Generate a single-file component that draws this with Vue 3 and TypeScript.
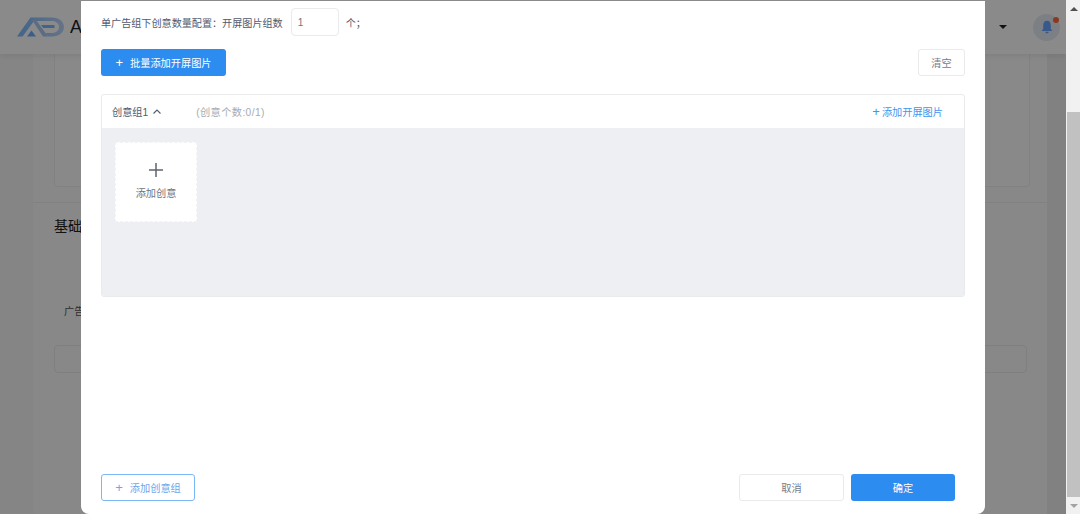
<template>
  <div class="page">
    <div class="stage">
      <!-- page behind the modal -->
      <div class="behind">
        <header class="topbar">
          <svg class="logo" width="47" height="20" viewBox="0 0 47 20">
            <defs>
              <linearGradient id="logoFade" x1="0" y1="0" x2="1" y2="0">
                <stop offset="0" stop-color="#7ab8ff" />
                <stop offset="1" stop-color="#bcd6f8" />
              </linearGradient>
            </defs>
            <path d="M0 19.5 L13.5 0.5 H35 C42 0.5 47 4.5 47 10 C47 15.5 42 19.5 35 19.5 H31 L28.4 16 H35 C39 16 42 13.5 42 10 C42 6.5 39 4 35 4 H17 L5.6 19.5 Z" fill="url(#logoFade)" />
            <path d="M15 3 H19 L31 19.5 H26 Z" fill="#a9c8f3" />
            <path d="M24 8 H37.5 V11 H26.2 Z" fill="#7ab8ff" />
            <path d="M10 19.5 L14.5 13.5 L19 19.5 Z" fill="#6aaeff" />
          </svg>
          <span class="brand">Ad</span>
          <span class="spacer"></span>
          <span class="caret"></span>
          <span class="bell">
            <svg width="12" height="14" viewBox="0 0 14 16">
              <path d="M7 0.8 C4 0.8 2.6 3 2.6 6 V10 L0.8 12.6 H13.2 L11.4 10 V6 C11.4 3 10 0.8 7 0.8 Z" fill="#6aa5ff" />
              <path d="M5 13.6 H9 C9 15 8 15.6 7 15.6 C6 15.6 5 15 5 13.6 Z" fill="#6aa5ff" />
            </svg>
            <i class="dot"></i>
          </span>
        </header>
        <div class="behind-body">
          <div class="side"></div>
          <main class="content">
            <div class="top-block">
              <div class="card"></div>
            </div>
            <div class="base">
              <h3 class="base-title">基础信息</h3>
              <p class="base-label">广告组</p>
              <div class="base-input"></div>
            </div>
          </main>
          <div class="side-right"></div>
        </div>
      </div>
      <div class="mask"></div>

      <!-- modal -->
      <section class="dialog">
        <div class="config-row">
          <span>单广告组下创意数量配置：开屏图片组数</span>
          <span class="num-input">1</span>
          <span>个；</span>
        </div>

        <div class="action-row">
          <button class="btn primary batch"><span class="plus">+</span>批量添加开屏图片</button>
          <button class="btn clear">清空</button>
        </div>

        <div class="group">
          <div class="group-head">
            <span class="group-name">创意组1</span>
            <svg class="chevron" width="8" height="5" viewBox="0 0 8 5">
              <path d="M0.5 4.5 L4 1 L7.5 4.5" fill="none" stroke="#515a6e" stroke-width="1.1" />
            </svg>
            <span class="group-count">(创意个数:0/1)</span>
            <span class="group-add"><b>+</b>添加开屏图片</span>
          </div>
          <div class="group-body">
            <div class="add-tile">
              <svg width="14" height="14" viewBox="0 0 14 14">
                <path d="M7 0 V14 M0 7 H14" stroke="#5f6470" stroke-width="1.5" />
              </svg>
              <span>添加创意</span>
            </div>
          </div>
        </div>

        <footer class="dialog-foot">
          <button class="btn outline"><span class="plus">+</span>添加创意组</button>
          <span class="spacer"></span>
          <button class="btn cancel">取消</button>
          <button class="btn primary ok">确定</button>
        </footer>
      </section>
    </div>

    <div class="scrollbar">
      <span class="arrow up"></span>
      <div class="track"><div class="thumb"></div></div>
      <span class="arrow down"></span>
    </div>
  </div>
</template>

<script setup lang="ts">
</script>

<style>
html,
body {
  margin: 0;
  height: 100%;
  overflow: hidden;
}
</style>

<style scoped>
.page {
  display: flex;
  height: 514px;
  font-family: "Liberation Sans", "Noto Sans CJK SC", sans-serif;
  font-size: 10.2px;
  color: #515a6e;
}

.stage {
  position: relative;
  flex: 1;
  overflow: hidden;
  border-right: 1px solid #f2f2f2;
}

.behind {
  display: flex;
  flex-direction: column;
  height: 100%;
  background: #f5f6f9;
}

.topbar {
  position: relative;
  display: flex;
  align-items: center;
  height: 54px;
  flex: none;
  padding: 0 6px 0 17px;
  box-sizing: border-box;
  background: #fff;
  box-shadow: 0 2px 6px rgba(0, 10, 40, 0.08);
}

.logo {
  flex: none;
}

.brand {
  margin-left: 6px;
  font-size: 18px;
  color: #222;
}

.spacer {
  flex: 1;
}

.caret {
  width: 0;
  height: 0;
  margin-right: 26px;
  border: 4px solid transparent;
  border-top: 4px solid #222;
  border-bottom: 0;
}

.bell {
  position: relative;
  display: flex;
  align-items: center;
  justify-content: center;
  width: 27px;
  height: 27px;
  border-radius: 50%;
  background: #e6ecf5;
}

.dot {
  position: absolute;
  top: 3px;
  right: 1px;
  width: 6px;
  height: 6px;
  border-radius: 50%;
  background: #ff6a3c;
}

.behind-body {
  display: flex;
  flex: 1;
  min-height: 0;
}

.side {
  width: 33px;
  flex: none;
  background: #f6f6f6;
}

.side-right {
  width: 19px;
  flex: none;
  background: #eeeeef;
}

.content {
  flex: 1;
  min-width: 0;
  background: #fbfbfb;
}

.top-block {
  height: 149px;
  padding: 0 17px 0 21px;
  box-sizing: border-box;
  border-bottom: 1px solid #eeeeee;
}

.card {
  height: 133px;
  box-sizing: border-box;
  border: 1px solid #efefef;
  border-top: 0;
  border-radius: 0 0 4px 4px;
  background: #fdfdfd;
}

.base {
  padding: 13px 20px 0 21px;
}

.base-title {
  margin: 0;
  font-size: 14px;
  line-height: 20px;
  font-weight: 400;
  color: #222;
}

.base-label {
  margin: 68px 0 0 10px;
  font-size: 10.2px;
  line-height: 16px;
  color: #555;
}

.base-input {
  height: 28px;
  margin-top: 25px;
  box-sizing: border-box;
  border: 1px solid #ebebeb;
  border-radius: 4px;
}

.mask {
  position: absolute;
  inset: 0;
  background: rgba(0, 0, 0, 0.46);
}

.dialog {
  position: absolute;
  top: 1px;
  left: 81px;
  bottom: 0;
  width: 904px;
  display: flex;
  flex-direction: column;
  padding: 7px 20px 13px;
  box-sizing: border-box;
  background: #fff;
  border-radius: 0 0 8px 8px;
}

.config-row {
  display: flex;
  align-items: center;
  height: 28px;
  font-size: 10.1px;
}

.num-input {
  display: flex;
  align-items: center;
  width: 48px;
  height: 28px;
  margin: 0 7px 0 8px;
  padding-left: 6px;
  box-sizing: border-box;
  border: 1px solid #e8eaec;
  border-radius: 4px;
  color: #777;
}

.action-row {
  display: flex;
  justify-content: space-between;
  margin-top: 13px;
}

.btn {
  height: 27px;
  padding: 0 0 1px;
  box-sizing: border-box;
  border: 1px solid transparent;
  border-radius: 3px;
  background: #fff;
  font-family: inherit;
  font-size: 10.2px;
  color: #515a6e;
}

.primary {
  background: #2d8cf0;
  color: #fff;
}

.plus {
  margin-right: 7px;
  font-size: 13px;
  font-weight: 400;
}

.batch {
  width: 125px;
}

.clear {
  width: 47px;
  border-color: #e8eaec;
  color: #757b87;
}

.group {
  height: 203px;
  margin-top: 18px;
  display: flex;
  flex-direction: column;
  box-sizing: border-box;
  border: 1px solid #e8eaec;
  border-radius: 3px;
}

.group-head {
  display: flex;
  align-items: center;
  flex: none;
  height: 33px;
  padding: 0 21px 0 10px;
}

.chevron {
  margin-left: 5px;
}

.group-count {
  margin-left: 35px;
  color: #a8abb2;
  letter-spacing: 0.4px;
}

.group-add {
  margin-left: auto;
  color: #3f95f0;
}

.group-add b {
  margin-right: 2px;
  font-size: 13px;
  font-weight: 400;
}

.group-body {
  flex: 1;
  padding: 14px 13px 13px;
  background: #eeeff3;
}

.add-tile {
  display: flex;
  flex-direction: column;
  align-items: center;
  width: 82px;
  height: 80px;
  padding-top: 20px;
  gap: 8px;
  box-sizing: border-box;
  border: 1px dashed #f3f3f3;
  background: #fff;
  color: #70747d;
}

.dialog-foot {
  display: flex;
  margin-top: auto;
  padding-right: 10px;
}

.outline {
  width: 94px;
  border-color: #7db8f6;
  color: #6aa8ee;
}

.cancel {
  width: 105px;
  border-color: #e8eaec;
  color: #757b87;
}

.ok {
  width: 104px;
  margin-left: 7px;
}

.scrollbar {
  display: flex;
  flex-direction: column;
  width: 13px;
  flex: none;
  background: #f1f1f1;
}

.arrow {
  flex: none;
  height: 17px;
  display: flex;
  align-items: center;
  justify-content: center;
}

.arrow::before {
  content: "";
  border: 4px solid transparent;
}

.arrow.up::before {
  border-top: 0;
  border-bottom: 4px solid #505050;
}

.arrow.down::before {
  border-bottom: 0;
  border-top: 4px solid #a3a3a3;
}

.track {
  flex: 1;
  padding-top: 95px;
}

.thumb {
  height: 385px;
  background: #c1c1c1;
}
</style>
